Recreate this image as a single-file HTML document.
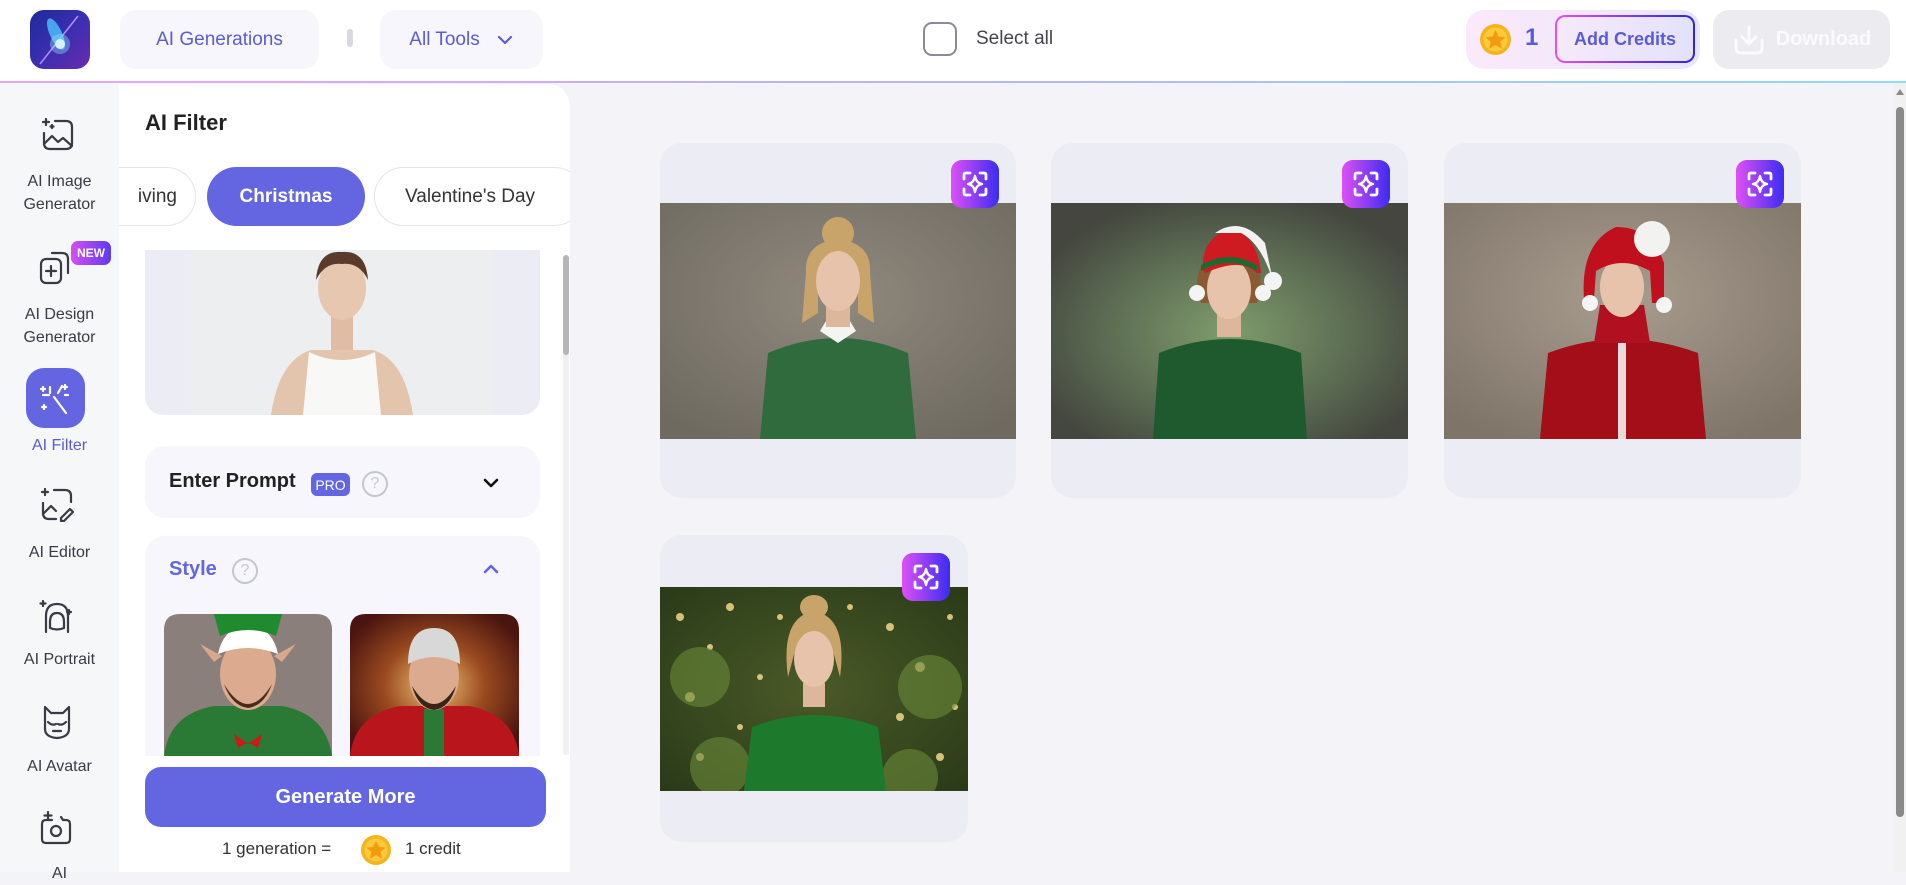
<!DOCTYPE html>
<html><head><meta charset="utf-8"><style>
*{box-sizing:border-box;margin:0;padding:0}
body{width:1906px;height:872px;overflow:hidden;font-family:"Liberation Sans",sans-serif;background:#f3f3f8;position:relative;color:#2a2a35}
.a{position:absolute}
.pill{position:absolute;background:#f6f6fc;border-radius:16px;color:#5b5bd6;font-size:19px;display:flex;align-items:center;justify-content:center}
.side{position:absolute;left:0;top:83px;width:119px;height:789px;background:#f6f7f8}
.si{position:absolute;left:0;width:119px;text-align:center;font-size:16px;line-height:23px;color:#3a3a45}
.card{position:absolute;background:#ececf5;border-radius:22px;overflow:hidden}
.ic{position:absolute;width:48px;height:48px;border-radius:11px;background:linear-gradient(90deg,#dc4ff5,#3b2cf2)}
</style></head><body>
<div class="a" style="left:0;top:0;width:1906px;height:81px;background:#fff"></div>
<div class="a" style="left:0;top:81px;width:1906px;height:2px;background:linear-gradient(90deg,#e6a6f6,#b9b4f6 50%,#8edcf8)"></div>
<div class="a" style="left:30px;top:10px;width:60px;height:59px;border-radius:14px;background:linear-gradient(135deg,#1d2a9a,#3a2fb0 50%,#6a2ab0);overflow:hidden">
<svg width="60" height="59"><line x1="48" y1="6" x2="10" y2="54" stroke="#b58cff" stroke-width="1.5"/><ellipse cx="26" cy="24" rx="6" ry="17" fill="#4fc3ff" opacity=".8" transform="rotate(-25 26 24)"/><circle cx="30" cy="34" r="5" fill="#fff"/><circle cx="30" cy="34" r="10" fill="#8fe0ff" opacity=".4"/></svg></div>
<div class="pill" style="left:120px;top:10px;width:199px;height:59px">AI Generations</div>
<div class="a" style="left:347px;top:29px;width:6px;height:18px;border-radius:3px;background:#d8d8de"></div>
<div class="pill" style="left:380px;top:10px;width:163px;height:59px">All Tools<svg width="18" height="12" style="margin-left:16px"><path d="M3 3l6 6 6-6" fill="none" stroke="#5b5bd6" stroke-width="2.2" stroke-linecap="round" stroke-linejoin="round"/></svg></div>
<div class="a" style="left:923px;top:22px;width:34px;height:34px;border:2px solid #8a8a96;border-radius:9px"></div>
<div class="a" style="left:976px;top:28px;font-size:19px;color:#444450">Select all</div>
<div class="a" style="left:1466px;top:10px;width:234px;height:59px;border-radius:18px;background:linear-gradient(90deg,#fbe9fb,#e8e6fb)"></div>
<svg class="a" style="left:1479px;top:23px" width="33" height="33"><circle cx="16.5" cy="16.5" r="15.5" fill="#f2b51c"/><circle cx="16.5" cy="16.5" r="12" fill="#fcc93a"/><path d="M16.5 7l3 6.5 7 .6-5.3 4.6 1.6 7-6.3-3.8-6.3 3.8 1.6-7-5.3-4.6 7-.6z" fill="#f29a12"/></svg>
<div class="a" style="left:1525px;top:24px;font-size:24px;font-weight:bold;color:#5b5bd6">1</div>
<div class="a" style="left:1555px;top:15px;width:140px;height:48px;border-radius:10px;padding:2px;background:linear-gradient(90deg,#e84ff0,#2c22f0)"><div style="width:100%;height:100%;border-radius:8px;background:linear-gradient(90deg,#f6e9fb,#e3e2fb);color:#5b5bd6;font-size:18px;font-weight:bold;display:flex;align-items:center;justify-content:center">Add Credits</div></div>
<div class="a" style="left:1713px;top:10px;width:177px;height:59px;border-radius:16px;background:#ebebf0;color:#fbfbfd;font-size:20px;font-weight:bold;display:flex;align-items:center;justify-content:center;gap:10px"><svg width="34" height="32"><path d="M4 16v8q0 5 5 5h16q5 0 5-5v-8M17 3v17M10 13l7 7 7-7" fill="none" stroke="#fbfbfd" stroke-width="3" stroke-linecap="round" stroke-linejoin="round"/></svg>Download</div>

<div class="side"></div>
<svg class="a" style="left:40px;top:116px" width="36" height="38" fill="none" stroke="#3a3a45" stroke-width="2.2" stroke-linecap="round" stroke-linejoin="round"><path d="M15 5h11q6 0 6 6v16q0 6-6 6H10q-6 0-6-6V17"/><path d="M4 28l8-8 6 6 5-4 9 8"/><path d="M6 3v6M3 6h6M12 9v3M10.5 10.5h3"/></svg>
<div class="si" style="top:170px">AI Image<br>Generator</div>
<svg class="a" style="left:38px;top:250px" width="36" height="36" fill="none" stroke="#3a3a45" stroke-width="2.2" stroke-linecap="round" stroke-linejoin="round"><rect x="3" y="9" width="20" height="24" rx="5"/><path d="M14 3h10q6 0 6 6v14"/><path d="M13 16v10M8 21h10"/></svg>
<div class="a" style="left:71px;top:241px;width:40px;height:24px;border-radius:7px;background:linear-gradient(90deg,#d64ff2,#5b3cf0);color:#fff;font-size:12px;font-weight:bold;display:flex;align-items:center;justify-content:center">NEW</div>
<div class="si" style="top:303px">AI Design<br>Generator</div>
<div class="a" style="left:26px;top:368px;width:59px;height:60px;border-radius:18px;background:#6366e0"></div>
<svg class="a" style="left:38px;top:381px" width="36" height="36" fill="none" stroke="#fff" stroke-width="2.2" stroke-linecap="round"><path d="M16 16l12 16M12 6v6M24 5l-4 7M5 14h6M27 14h3M5 6v4M3 8h4M27 4v4M25 6h4M6 24v4M4 26h4"/></svg>
<div class="si" style="top:434px;color:#5b5bd6">AI Filter</div>
<svg class="a" style="left:39px;top:486px" width="36" height="36" fill="none" stroke="#3a3a45" stroke-width="2.2" stroke-linecap="round" stroke-linejoin="round"><path d="M15 4h11q6 0 6 6v6M17 33H10q-6 0-6-6V17"/><path d="M4 28l8-8 5 5"/><path d="M22 32l9-9 3 3-9 9h-3z"/><path d="M6 3v6M3 6h6"/></svg>
<div class="si" style="top:541px">AI Editor</div>
<svg class="a" style="left:38px;top:598px" width="36" height="38" fill="none" stroke="#3a3a45" stroke-width="2.2" stroke-linecap="round" stroke-linejoin="round"><path d="M8 34V18q0-12 11-12t11 12v16"/><path d="M12 24q0-9 7-9t7 9v6q-7 3-14 0z"/><path d="M5 3v5M2.5 5.5h5M31 12v4M29 14h4"/></svg>
<div class="si" style="top:648px">AI Portrait</div>
<svg class="a" style="left:39px;top:704px" width="36" height="36" fill="none" stroke="#3a3a45" stroke-width="2.2" stroke-linecap="round" stroke-linejoin="round"><path d="M6 3l6 6h12l6-6v22q0 8-12 9-12-1-12-9z"/><path d="M9 18q4 4 8 2M27 18q-4 4-8 2M14 27h8"/></svg>
<div class="si" style="top:755px">AI Avatar</div>
<svg class="a" style="left:38px;top:810px" width="36" height="36" fill="none" stroke="#3a3a45" stroke-width="2.2" stroke-linecap="round" stroke-linejoin="round"><path d="M14 10h-6q-4 0-4 4v15q0 4 4 4h20q4 0 4-4V14q0-4-4-4h-3l-2-3"/><circle cx="18" cy="21" r="5"/><path d="M10 2v7M6.5 5.5h7"/></svg>
<div class="si" style="top:862px">AI</div>

<div class="a" style="left:119px;top:84px;width:451px;height:788px;background:#fff;border-radius:0 22px 0 0;overflow:hidden">
<div class="a" style="left:26px;top:26px;font-size:22px;font-weight:bold;color:#222">AI Filter</div>
<div class="a" style="left:-40px;top:83px;width:117px;height:59px;border:1.5px solid #e4e4ea;border-radius:30px;display:flex;align-items:center;justify-content:flex-end;padding-right:18px;font-size:19px;color:#333">iving</div>
<div class="a" style="left:88px;top:83px;width:158px;height:59px;border-radius:30px;background:#6366e0;color:#fff;font-size:19px;font-weight:bold;display:flex;align-items:center;justify-content:center">Christmas</div>
<div class="a" style="left:255px;top:83px;width:210px;height:59px;border:1.5px solid #e4e4ea;border-radius:30px;font-size:19px;color:#333;display:flex;align-items:center;padding-left:30px">Valentine's Day</div>
<div class="a" style="left:26px;top:166px;width:395px;height:165px;background:#ececf4;border-radius:0 0 18px 18px;overflow:hidden">
<svg class="a" style="left:46px;top:0" width="302" height="165"><rect width="302" height="165" fill="#eceeef"/><path d="M80 165 Q88 110 120 100 L182 100 Q214 110 222 165z" fill="#e3c4ad"/><path d="M112 165 L118 102 Q151 118 184 102 L190 165z" fill="#f8f8f6"/><rect x="140" y="60" width="22" height="40" fill="#e0bca4"/><ellipse cx="151" cy="38" rx="24" ry="32" fill="#e8c7b1"/><path d="M125 30 Q127 0 151 2 Q175 0 177 30 Q168 12 151 14 Q134 12 125 30z" fill="#5a3a2a"/></svg></div>
<div class="a" style="left:444px;top:171px;width:6px;height:500px;border-radius:3px;background:#f0f0f2"></div>
<div class="a" style="left:444px;top:171px;width:6px;height:100px;border-radius:3px;background:#b5b5ba"></div>
<div class="a" style="left:26px;top:362px;width:395px;height:72px;background:#f6f6fc;border-radius:20px"></div>
<div class="a" style="left:50px;top:386px;font-size:20px;font-weight:bold;color:#222">Enter Prompt</div>
<div class="a" style="left:192px;top:389px;width:39px;height:23px;border-radius:6px;background:#6366e0;color:#fff;font-size:14px;display:flex;align-items:center;justify-content:center">PRO</div>
<div class="a" style="left:243px;top:387px;width:26px;height:26px;border:2px solid #c6c6ce;border-radius:50%;color:#c6c6ce;font-size:16px;text-align:center;line-height:22px">?</div>
<svg class="a" style="left:363px;top:392px" width="18" height="14"><path d="M3 4l6 6 6-6" fill="none" stroke="#111" stroke-width="2.6" stroke-linecap="round" stroke-linejoin="round"/></svg>
<div class="a" style="left:26px;top:452px;width:395px;height:220px;background:#f6f6fc;border-radius:20px 20px 0 0;overflow:hidden">
<div class="a" style="left:24px;top:22px;font-size:20px;font-weight:bold;color:#6366e0">Style</div>
<div class="a" style="left:87px;top:22px;width:26px;height:26px;border:2px solid #c6c6ce;border-radius:50%;color:#c6c6ce;font-size:16px;text-align:center;line-height:22px">?</div>
<svg class="a" style="left:337px;top:26px" width="18" height="14"><path d="M3 10l6-6 6 6" fill="none" stroke="#6366e0" stroke-width="2.6" stroke-linecap="round" stroke-linejoin="round"/></svg>
<svg class="a" style="left:19px;top:78px" width="168" height="142"><defs><clipPath id="c1"><path d="M0 142V16Q0 0 16 0H152Q168 0 168 16V142z"/></clipPath></defs><g clip-path="url(#c1)"><rect width="168" height="142" fill="#8a7f7a"/><path d="M0 142 Q5 100 50 92 L118 92 Q162 100 168 142z" fill="#2a7a35"/><path d="M70 120 l14 10 14-10 -4 14 -10-6 -10 6z" fill="#d11818"/><rect x="72" y="80" width="24" height="20" fill="#2a7a35"/><path d="M50 48 l-14 -18 22 12z M118 48 l14 -18 -22 12z" fill="#d8a88e"/><ellipse cx="84" cy="60" rx="28" ry="36" fill="#dcaa8e"/><path d="M60 70 Q84 110 108 70 Q100 92 84 94 Q68 92 60 70z" fill="#4a2a1a"/><path d="M54 40 Q60 12 84 12 Q108 12 114 40 Q84 28 54 40z" fill="#fff"/><path d="M56 22 L50 0 L118 0 L112 22 Q84 10 56 22z" fill="#1f8a2e"/></g></svg>
<svg class="a" style="left:205px;top:78px" width="169" height="142"><defs><clipPath id="c2"><path d="M0 142V16Q0 0 16 0H153Q169 0 169 16V142z"/></clipPath><radialGradient id="g2" cx=".5" cy=".5" r=".6"><stop offset="0" stop-color="#f2c67a"/><stop offset=".5" stop-color="#9a4a1f"/><stop offset="1" stop-color="#4a1410"/></radialGradient></defs><g clip-path="url(#c2)"><rect width="169" height="142" fill="url(#g2)"/><path d="M0 142 Q5 100 50 92 L119 92 Q164 100 169 142z" fill="#b8161c"/><rect x="74" y="95" width="20" height="47" fill="#2a7a35"/><ellipse cx="84" cy="62" rx="25" ry="34" fill="#dcaa8e"/><path d="M62 72 Q84 108 106 72 Q100 94 84 96 Q68 94 62 72z" fill="#3a2418"/><path d="M58 50 Q58 14 84 14 Q110 14 110 50 Q84 36 58 50z" fill="#d8d8d8"/></g></svg>
</div>
<div class="a" style="left:26px;top:683px;width:401px;height:60px;border-radius:16px;background:#6366e0;color:#fff;font-size:20px;font-weight:bold;display:flex;align-items:center;justify-content:center">Generate More</div>
<div class="a" style="left:103px;top:755px;font-size:17px;color:#333">1 generation =</div>
<svg class="a" style="left:241px;top:750px" width="32" height="32"><circle cx="16" cy="16" r="15" fill="#f2b51c"/><circle cx="16" cy="16" r="11.5" fill="#fcc93a"/><path d="M16 7l3 6 6.6.6-5 4.4 1.5 6.6L16 21l-6.1 3.6 1.5-6.6-5-4.4L13 13z" fill="#f29a12"/></svg>
<div class="a" style="left:286px;top:755px;font-size:17px;color:#333">1 credit</div>
</div>

<div class="a" style="left:1894px;top:83px;width:12px;height:789px;background:#f1f1f1"></div>
<svg class="a" style="left:1895px;top:88px" width="10" height="8"><path d="M1 7L5 1L9 7z" fill="#8a8a8a"/></svg>
<div class="a" style="left:1896px;top:107px;width:8px;height:710px;border-radius:4px;background:#8a8a8a"></div>

<div class="card" style="left:660px;top:143px;width:356px;height:355px">
<svg class="a" style="left:0;top:60px" width="356" height="236"><defs><radialGradient id="b1" cx=".5" cy=".4" r=".7"><stop offset="0" stop-color="#8f897e"/><stop offset="1" stop-color="#6f6a60"/></radialGradient></defs><rect width="356" height="236" fill="url(#b1)"/><path d="M100 236 L108 150 Q178 120 248 150 L256 236z" fill="#2f6b3c"/><path d="M160 128 L178 140 L196 128 L190 118 L166 118z" fill="#f4f4f0"/><rect x="166" y="100" width="24" height="24" fill="#dcb79c"/><ellipse cx="178" cy="30" rx="16" ry="16" fill="#c9a46a"/><path d="M146 70 Q144 40 178 36 Q212 40 210 70 L214 120 L198 110 L198 70 L158 70 L158 110 L142 120z" fill="#c9a46a"/><ellipse cx="178" cy="78" rx="22" ry="30" fill="#e6c3aa"/></svg>
<svg class="ic" style="left:291px;top:17px" viewBox="0 0 48 48"><rect width="48" height="48" rx="11" fill="url(#ig)"/><defs><linearGradient id="ig"><stop offset="0" stop-color="#de50f5"/><stop offset="1" stop-color="#3b2cf2"/></linearGradient></defs><path d="M13 19v-4q0-2 2-2h4M29 13h4q2 0 2 2v4M35 29v4q0 2-2 2h-4M19 35h-4q-2 0-2-2v-4" fill="none" stroke="#fff" stroke-width="2.8" stroke-linecap="round"/><path d="M24 16Q25 23 31 24Q25 25 24 32Q23 25 17 24Q23 23 24 16z" fill="none" stroke="#fff" stroke-width="2.4" stroke-linejoin="round"/></svg>
</div>
<div class="card" style="left:1051px;top:143px;width:357px;height:355px">
<svg class="a" style="left:0;top:60px" width="357" height="236"><defs><radialGradient id="b2" cx=".5" cy=".55" r=".6"><stop offset="0" stop-color="#7f9c6c"/><stop offset=".6" stop-color="#5b6a52"/><stop offset="1" stop-color="#44463f"/></radialGradient></defs><rect width="357" height="236" fill="url(#b2)"/><path d="M102 236 L108 150 Q178 122 250 150 L256 236z" fill="#1e5a2e"/><rect x="166" y="110" width="24" height="24" fill="#dcb79c"/><path d="M150 100 Q140 70 156 56 L200 56 Q216 70 206 100z" fill="#8a5a34"/><ellipse cx="178" cy="86" rx="22" ry="30" fill="#e6c3aa"/><path d="M152 66 Q150 36 178 26 Q206 30 210 70 L206 70 Q190 54 154 70z" fill="#d01a22"/><path d="M150 68 Q178 52 206 68 L206 62 Q178 46 150 62z" fill="#1e6a2e"/><path d="M164 30 Q190 12 214 40 L222 78 Q210 40 190 30z" fill="#f2f2f0"/><circle cx="222" cy="78" r="9" fill="#f4f4f4"/><circle cx="146" cy="90" r="8" fill="#f4f4f4"/><circle cx="212" cy="90" r="8" fill="#f4f4f4"/></svg>
<svg class="ic" style="left:291px;top:17px" viewBox="0 0 48 48"><rect width="48" height="48" rx="11" fill="url(#ig)"/><path d="M13 19v-4q0-2 2-2h4M29 13h4q2 0 2 2v4M35 29v4q0 2-2 2h-4M19 35h-4q-2 0-2-2v-4" fill="none" stroke="#fff" stroke-width="2.8" stroke-linecap="round"/><path d="M24 16Q25 23 31 24Q25 25 24 32Q23 25 17 24Q23 23 24 16z" fill="none" stroke="#fff" stroke-width="2.4" stroke-linejoin="round"/></svg>
</div>
<div class="card" style="left:1444px;top:143px;width:357px;height:355px">
<svg class="a" style="left:0;top:60px" width="357" height="236"><defs><radialGradient id="b3" cx=".5" cy=".4" r=".7"><stop offset="0" stop-color="#a89c8e"/><stop offset="1" stop-color="#7e7468"/></radialGradient></defs><rect width="357" height="236" fill="url(#b3)"/><path d="M96 236 L104 150 Q178 122 254 150 L262 236z" fill="#a30e18"/><rect x="174" y="140" width="8" height="96" fill="#eadada"/><path d="M156 102 L200 102 L206 140 L150 140z" fill="#b01020"/><ellipse cx="178" cy="84" rx="22" ry="30" fill="#e6c3aa"/><path d="M140 96 Q136 40 172 24 Q208 24 220 60 L220 100 L208 100 L206 68 Q178 52 152 68 L150 96z" fill="#c0101e"/><circle cx="208" cy="36" r="18" fill="#f2f2f0"/><circle cx="146" cy="100" r="8" fill="#f4f4f4"/><circle cx="220" cy="102" r="8" fill="#f4f4f4"/></svg>
<svg class="ic" style="left:292px;top:17px" viewBox="0 0 48 48"><rect width="48" height="48" rx="11" fill="url(#ig)"/><path d="M13 19v-4q0-2 2-2h4M29 13h4q2 0 2 2v4M35 29v4q0 2-2 2h-4M19 35h-4q-2 0-2-2v-4" fill="none" stroke="#fff" stroke-width="2.8" stroke-linecap="round"/><path d="M24 16Q25 23 31 24Q25 25 24 32Q23 25 17 24Q23 23 24 16z" fill="none" stroke="#fff" stroke-width="2.4" stroke-linejoin="round"/></svg>
</div>
<div class="card" style="left:660px;top:535px;width:308px;height:307px">
<svg class="a" style="left:0;top:52px" width="308" height="204"><defs><radialGradient id="b4" cx=".5" cy=".5" r=".7"><stop offset="0" stop-color="#4a5a28"/><stop offset="1" stop-color="#2a3a18"/></radialGradient></defs><rect width="308" height="204" fill="url(#b4)"/><g fill="#f2d88a" opacity=".85"><circle cx="20" cy="30" r="4"/><circle cx="50" cy="60" r="3"/><circle cx="30" cy="110" r="5"/><circle cx="70" cy="20" r="4"/><circle cx="80" cy="140" r="3"/><circle cx="40" cy="170" r="4"/><circle cx="100" cy="90" r="3"/><circle cx="230" cy="40" r="4"/><circle cx="260" cy="80" r="5"/><circle cx="290" cy="30" r="3"/><circle cx="240" cy="130" r="4"/><circle cx="280" cy="170" r="4"/><circle cx="210" cy="180" r="3"/><circle cx="295" cy="120" r="3"/><circle cx="120" cy="30" r="3"/><circle cx="190" cy="20" r="3"/></g><g fill="#6a8a3a" opacity=".6"><circle cx="40" cy="90" r="30"/><circle cx="270" cy="100" r="32"/><circle cx="60" cy="180" r="30"/><circle cx="250" cy="190" r="28"/></g><path d="M84 204 L92 140 Q154 116 218 140 L226 204z" fill="#1d7a2c"/><rect x="143" y="96" width="22" height="24" fill="#dcb79c"/><path d="M128 90 Q120 30 154 24 Q188 30 180 90 L172 60 L136 60z" fill="#c9a46a"/><ellipse cx="154" cy="20" rx="14" ry="12" fill="#c9a46a"/><ellipse cx="154" cy="72" rx="20" ry="28" fill="#e6c3aa"/></svg>
<svg class="ic" style="left:242px;top:18px" viewBox="0 0 48 48"><rect width="48" height="48" rx="11" fill="url(#ig)"/><path d="M13 19v-4q0-2 2-2h4M29 13h4q2 0 2 2v4M35 29v4q0 2-2 2h-4M19 35h-4q-2 0-2-2v-4" fill="none" stroke="#fff" stroke-width="2.8" stroke-linecap="round"/><path d="M24 16Q25 23 31 24Q25 25 24 32Q23 25 17 24Q23 23 24 16z" fill="none" stroke="#fff" stroke-width="2.4" stroke-linejoin="round"/></svg>
</div>
</body></html>
